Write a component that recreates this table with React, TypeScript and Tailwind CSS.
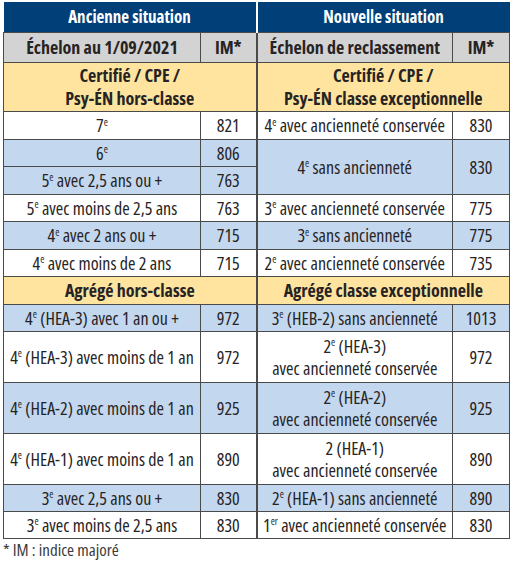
import React from "react";

const Sup = ({ t }: { t: string }) => <sup className="text-[10px] top-[-0.65em]">{t}</sup>;

type Cell = { n: string; s?: string; rest?: string; line2?: string; im: string; blue?: boolean; span?: number } | null;

const td = "border border-[#4a4a4a] text-center align-middle p-0 leading-[22px]";

function Label({ c }: { c: NonNullable<Cell> }) {
  return (
    <>
      {c.n}
      {c.s && <Sup t={c.s} />}
      {c.rest}
      {c.line2 && (
        <>
          <br />
          {c.line2}
        </>
      )}
    </>
  );
}

type Row = { h: number; l: Cell; r: Cell };

const rows1: Row[] = [
  { h: 28, l: { n: "7", s: "e", im: "821" }, r: { n: "4", s: "e", rest: " avec ancienneté conservée", im: "830" } },
  { h: 27, l: { n: "6", s: "e", im: "806", blue: true }, r: { n: "4", s: "e", rest: " sans ancienneté", im: "830", blue: true, span: 2 } },
  { h: 28, l: { n: "5", s: "e", rest: " avec 2,5 ans ou +", im: "763", blue: true }, r: null },
  { h: 27, l: { n: "5", s: "e", rest: " avec moins de 2,5 ans", im: "763" }, r: { n: "3", s: "e", rest: " avec ancienneté conservée", im: "775" } },
  { h: 28, l: { n: "4", s: "e", rest: " avec 2 ans ou +", im: "715", blue: true }, r: { n: "3", s: "e", rest: " sans ancienneté", im: "775", blue: true } },
  { h: 27, l: { n: "4", s: "e", rest: " avec moins de 2 ans", im: "715" }, r: { n: "2", s: "e", rest: " avec ancienneté conservée", im: "735" } },
];

const rows2: Row[] = [
  { h: 27, l: { n: "4", s: "e", rest: " (HEA-3) avec 1 an ou +", im: "972", blue: true }, r: { n: "3", s: "e", rest: " (HEB-2) sans ancienneté", im: "1013", blue: true } },
  { h: 51, l: { n: "4", s: "e", rest: " (HEA-3) avec moins de 1 an", im: "972" }, r: { n: "2", s: "e", rest: " (HEA-3)", line2: "avec ancienneté conservée", im: "972" } },
  { h: 51, l: { n: "4", s: "e", rest: " (HEA-2) avec moins de 1 an", im: "925", blue: true }, r: { n: "2", s: "e", rest: " (HEA-2)", line2: "avec ancienneté conservée", im: "925", blue: true } },
  { h: 51, l: { n: "4", s: "e", rest: " (HEA-1) avec moins de 1 an", im: "890" }, r: { n: "2", rest: " (HEA-1)", line2: "avec ancienneté conservée", im: "890" } },
  { h: 27, l: { n: "3", s: "e", rest: " avec 2,5 ans ou +", im: "830", blue: true }, r: { n: "2", s: "e", rest: " (HEA-1) sans ancienneté", im: "890", blue: true } },
  { h: 27, l: { n: "3", s: "e", rest: " avec moins de 2,5 ans", im: "830" }, r: { n: "1", s: "er", rest: " avec ancienneté conservée", im: "830" } },
];

function BodyRow({ row }: { row: Row }) {
  const { l, r, h } = row;
  const bg = (c: NonNullable<Cell>) => (c.blue ? "bg-[#c3d7ee]" : "bg-white");
  return (
    <tr style={{ height: h }}>
      {l && (
        <>
          <td className={`${td} ${bg(l)}`}>
            <Label c={l} />
          </td>
          <td className={`${td} ${bg(l)} border-r-2`}>{l.im}</td>
        </>
      )}
      {r && (
        <>
          <td rowSpan={r.span} className={`${td} ${bg(r)}`}>
            <Label c={r} />
          </td>
          <td rowSpan={r.span} className={`${td} ${bg(r)}`}>{r.im}</td>
        </>
      )}
    </tr>
  );
}

export default function App() {
  return (
    <div className="w-[513px] h-[564px] bg-white pt-[2px] pl-[3px] text-[#262324] font-['Open_Sans',sans-serif] font-stretch-[75%]">
      <table className="border-collapse table-fixed w-[506px] text-[18px]">
        <colgroup>
          <col className="w-[197px]" />
          <col className="w-[56px]" />
          <col className="w-[196px]" />
          <col className="w-[57px]" />
        </colgroup>
        <tbody>
          <tr className="h-[30px]">
            <td colSpan={2} className="bg-[#003f78] text-white font-bold text-[17px] text-center border-r-2 border-r-white p-0">
              Ancienne situation
            </td>
            <td colSpan={2} className="bg-[#003f78] text-white font-bold text-[17px] text-center p-0">
              Nouvelle situation
            </td>
          </tr>
          <tr className="h-[30px]">
            <td className={`${td} bg-[#d3d3d3] font-bold`}>Échelon au 1/09/2021</td>
            <td className={`${td} bg-[#d3d3d3] font-bold border-r-2`}>IM*</td>
            <td className={`${td} bg-[#d3d3d3] font-bold`}>Échelon de reclassement</td>
            <td className={`${td} bg-[#d3d3d3] font-bold`}>IM*</td>
          </tr>
          <tr className="h-[49px]">
            <td colSpan={2} className={`${td} bg-[#fee49f] font-bold leading-[23px] border-r-2`}>
              Certifié / CPE /<br />Psy-ÉN hors-classe
            </td>
            <td colSpan={2} className={`${td} bg-[#fee49f] font-bold leading-[23px]`}>
              Certifié / CPE /<br />Psy-ÉN classe exceptionnelle
            </td>
          </tr>
          {rows1.map((r, i) => (
            <BodyRow key={i} row={r} />
          ))}
          <tr className="h-[28px]">
            <td colSpan={2} className={`${td} bg-[#fee49f] font-bold border-r-2`}>Agrégé hors-classe</td>
            <td colSpan={2} className={`${td} bg-[#fee49f] font-bold`}>Agrégé classe exceptionnelle</td>
          </tr>
          {rows2.map((r, i) => (
            <BodyRow key={i} row={r} />
          ))}
        </tbody>
      </table>
      <div className="text-[17px] text-[#3a3a3a] mt-[1px] leading-[20px]">* IM : indice majoré</div>
    </div>
  );
}
